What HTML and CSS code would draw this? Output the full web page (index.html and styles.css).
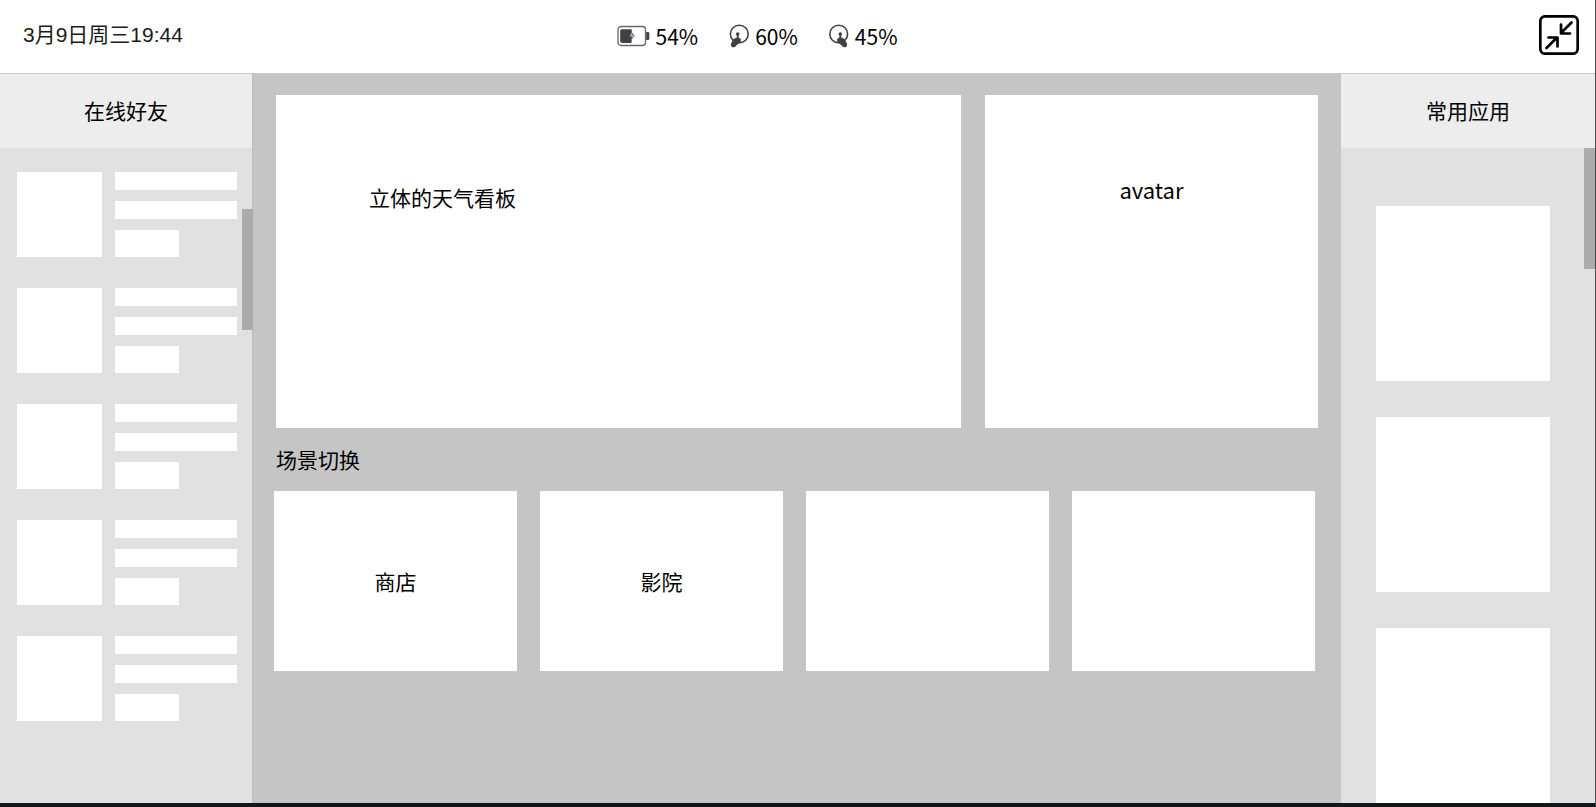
FILE: index.html
```html
<!DOCTYPE html>
<html lang="zh-CN">
<head>
<meta charset="utf-8">
<meta name="viewport" content="width=device-width, initial-scale=1">
<title>主页</title>
<link rel="stylesheet" href="styles.css">
</head>
<body>
<div class="app">
  <header class="topbar">
    <time class="clock" datetime="03-09T19:44">3月9日周三19:44</time>
    <ul class="status">
      <li class="status-item">
        <svg class="icon-battery" viewBox="0 0 33 22" aria-hidden="true">
          <rect x="1" y="1.500" width="27.500" height="19" rx="3" fill="#fff" stroke="#66676b" stroke-width="1.300"/>
          <path d="M29.200 7h1.800q1.300 0 1.300 1.300v5.400q0 1.300-1.300 1.300h-1.800z" fill="#404145"/>
          <path d="M5 4.300h9.500l.6 3.700 2.600 3-2.600 3-.8 3.900H5q-1.800 0-1.800-1.800V6.100q0-1.800 1.800-1.800z" fill="#404145"/>
          <path d="M15.500 6l-3.300 5.500h2.700l-.8 4.800 3.900-6.200h-2.800z" fill="#a5a6a9"/>
        </svg>
        <span>54%</span>
      </li>
      <li class="status-item">
        <svg class="icon-controller" viewBox="0 0 20 24" aria-hidden="true">
          <ellipse cx="10.300" cy="10" rx="8.900" ry="8.800" fill="none" stroke="#404145" stroke-width="1.600"/>
          <circle cx="8.700" cy="10" r="1.800" fill="#404145"/>
          <path d="M7.800 10.500h1.800v3l2.200 1.200v3l-4.500 3.800q-1.500 2.400-3.900 1.700-2.300-1.200-1.200-3.900l2.300-4.300 3.300-1.500z" fill="#404145"/>
        </svg>
        <span>60%</span>
      </li>
      <li class="status-item">
        <svg class="icon-controller" viewBox="0 0 20 24" aria-hidden="true">
          <ellipse cx="9.700" cy="10" rx="8.900" ry="8.800" fill="none" stroke="#404145" stroke-width="1.600"/>
          <circle cx="11.300" cy="10" r="1.800" fill="#404145"/>
          <path d="M12.200 10.500h-1.800v3l-2.200 1.200v3l4.500 3.800q1.500 2.400 3.900 1.700 2.300-1.200 1.200-3.900l-2.300-4.300-3.300-1.500z" fill="#404145"/>
        </svg>
        <span>45%</span>
      </li>
    </ul>
    <button class="collapse" type="button" aria-label="收起">
      <svg viewBox="0 0 40 40" aria-hidden="true" fill="none" stroke="#000" stroke-width="2.700" stroke-linecap="round" stroke-linejoin="round">
        <rect x="1.300" y="1.300" width="37.400" height="37.400" rx="5"/>
        <path d="M32.500 7.500L22.500 17.500M22 9.500v9h9"/>
        <path d="M7.500 33L17.500 23M9.500 22.500h9v9"/>
      </svg>
    </button>
  </header>

  <div class="body">
    <aside class="side friends">
      <h2 class="side-title">在线好友</h2>
      <div class="side-content">
        <ul class="friend-list">
          <li class="friend"><span class="portrait"></span><span class="line"></span><span class="line"></span><span class="tag"></span></li>
          <li class="friend"><span class="portrait"></span><span class="line"></span><span class="line"></span><span class="tag"></span></li>
          <li class="friend"><span class="portrait"></span><span class="line"></span><span class="line"></span><span class="tag"></span></li>
          <li class="friend"><span class="portrait"></span><span class="line"></span><span class="line"></span><span class="tag"></span></li>
          <li class="friend"><span class="portrait"></span><span class="line"></span><span class="line"></span><span class="tag"></span></li>
        </ul>
        <span class="thumb thumb-friends"></span>
      </div>
    </aside>

    <main class="main">
      <div class="boards">
        <section class="board weather">立体的天气看板</section>
        <section class="board avatar">avatar</section>
      </div>
      <h2 class="scene-title">场景切换</h2>
      <div class="scenes">
        <button class="scene" type="button">商店</button>
        <button class="scene" type="button">影院</button>
        <button class="scene" type="button" aria-label="场景三"></button>
        <button class="scene" type="button" aria-label="场景四"></button>
      </div>
    </main>

    <aside class="side apps">
      <h2 class="side-title">常用应用</h2>
      <div class="side-content">
        <div class="app-list">
          <button class="app-tile" type="button" aria-label="应用一"></button>
          <button class="app-tile" type="button" aria-label="应用二"></button>
          <button class="app-tile" type="button" aria-label="应用三"></button>
        </div>
        <span class="thumb thumb-apps"></span>
      </div>
    </aside>
  </div>
</div>
</body>
</html>
```
FILE: styles.css
```css
* {
  box-sizing: border-box;
}

body,
ul,
h2 {
  margin: 0;
  padding: 0;
}

ul {
  list-style: none;
}

body,
button {
  font-family: "Noto Sans CJK SC", "Noto Sans", sans-serif;
  font-size: 21px;
  line-height: 32px;
  color: #000;
}

button {
  padding: 0;
  border: 0;
  border-radius: 0;
  background: #fff;
  cursor: pointer;
}

h2 {
  font-size: 21px;
  font-weight: 400;
}

.app {
  display: flex;
  flex-direction: column;
  min-height: 100vh;
  border-right: 1px solid #4a4a4a;
  border-bottom: 4px solid #141517;
  background: #fff;
}

/* Top bar */
.topbar {
  display: grid;
  grid-template-columns: 27fr auto 31fr;
  align-items: center;
  height: 74px;
  padding: 0 16px 3px 23px;
  border-bottom: 1px solid #c9c9c9;
}

.clock {
  font-family: "Liberation Sans", "Noto Sans CJK SC", sans-serif;
  color: #1a1a1a;
}

.status {
  display: flex;
  gap: 31px;
  padding-top: 2px;
}

.status-item {
  display: flex;
  align-items: center;
  gap: 6px;
}

.icon-battery {
  width: 33px;
  height: 22px;
}

.icon-controller {
  width: 20px;
  height: 24px;
}

.collapse {
  justify-self: end;
  width: 40px;
  height: 40px;
}

.collapse svg {
  display: block;
}

/* Columns */
.body {
  display: grid;
  grid-template-columns: 252px 1fr 254px;
  flex: 1;
}

.side {
  display: flex;
  flex-direction: column;
  background: #e1e1e1;
}

.side-title {
  padding: 20px 0 22px;
  background: #ededed;
  text-align: center;
}

.side-content {
  position: relative;
  flex: 1;
}

.thumb {
  position: absolute;
  width: 11px;
  height: 121px;
  background: #acacac;
}

.thumb-friends {
  top: 61px;
  right: -1px;
}

.thumb-apps {
  top: 0;
  right: 0;
}

/* Friends */
.friend-list {
  display: grid;
  gap: 31px;
  padding: 24px 15px 24px 17px;
}

.friend {
  display: grid;
  grid-template-columns: 85px 1fr;
  grid-template-rows: 18px 18px 27px;
  gap: 11px 13px;
}

.portrait {
  grid-row: 1 / 4;
  background: #fff;
}

.line,
.tag {
  background: #fff;
}

.tag {
  width: 64px;
}

/* Centre */
.main {
  padding: 21px 23px 24px;
  background: #c5c5c5;
  border-left: 1px solid #bdbdbd;
}

.boards {
  display: grid;
  grid-template-columns: 685fr 333fr;
  gap: 24px;
}

.board {
  min-height: 333px;
  background: #fff;
}

.weather {
  padding: 86px 93px;
}

.avatar {
  padding: 78px 24px;
  font-size: 22px;
  text-align: center;
}

.scene-title {
  padding: 15px 0 16px;
}

.scenes {
  display: grid;
  grid-template-columns: repeat(4, 1fr);
  gap: 23px;
  margin: 0 3px 0 -2px;
}

.scene {
  height: 180px;
}

/* Apps */
.app-list {
  display: grid;
  gap: 36px;
  padding: 58px 45px 0 35px;
}

.app-tile {
  height: 175px;
}
```
